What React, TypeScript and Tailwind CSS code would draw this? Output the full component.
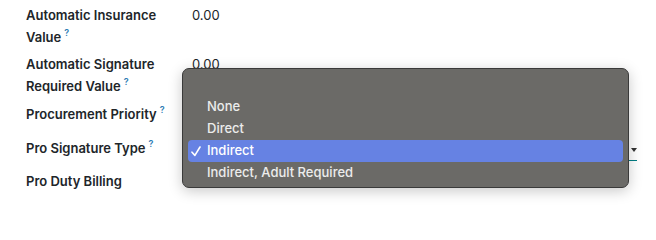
import React from "react";

const Help = () => (
  <span className="inline-block ml-[3px] text-[9px] leading-[9px] font-semibold text-[#2f7db5] relative -top-[6px]">?</span>
);

function Row({
  label,
  help,
  value,
  h,
  children,
}: {
  label: string;
  help?: boolean;
  value?: string;
  h: string;
  children?: React.ReactNode;
}) {
  return (
    <div className={`flex ${h}`}>
      <div className="w-[154px] shrink-0 font-semibold text-[13px] leading-[22px] text-[#212529]">
        {label}
        {help && <Help />}
      </div>
      <div className="ml-[12px] w-[445px] text-[13px] leading-[22px] text-[#212529]">
        {value}
        {children}
      </div>
    </div>
  );
}

export default function App() {
  const items = ["None", "Direct", "Indirect", "Indirect, Adult Required"];
  return (
    <div
      className="relative w-[656px] h-[206px] overflow-hidden bg-white"
      style={{ fontFamily: "Inter, 'Noto Sans', sans-serif" }}
    >
      <div className="flex flex-col pl-[26px] pt-[4px]">
        <Row label="Automatic Insurance Value" help value="0.00" h="h-[49px]" />
        <Row label="Automatic Signature Required Value" help value="0.00" h="h-[50px]" />
        <Row label="Procurement Priority" help h="h-[34px]" />
        <Row label="Pro Signature Type" help h="h-[33px]">
          <div className="relative h-[24px] border-b border-[#017e84]">
            <div className="absolute right-[0px] top-[11px] w-0 h-0 border-l-[3.5px] border-r-[3.5px] border-t-[4px] border-l-transparent border-r-transparent border-t-[#333]" />
          </div>
        </Row>
        <Row label="Pro Duty Billing" h="h-[30px]" />
      </div>

      <div className="absolute left-[182px] top-[68px] w-[447px] h-[120px] rounded-[7px] border border-[#3a3a3a] bg-[#6b6a67] shadow-[0_3px_14px_rgba(0,0,0,0.22)] px-[5px] pt-[27px]">
        {items.map((it) => {
          const sel = it === "Indirect";
          return (
            <div
              key={it}
              className={`relative h-[22px] flex items-center pl-[19px] text-[13px] font-medium ${
                sel ? "bg-[#6682e3] rounded-[4px] text-white" : "text-[#ececec]"
              }`}
            >
              {sel && (
                <svg className="absolute left-[3px] top-[6px]" width="10" height="11" viewBox="0 0 10 11" fill="none">
                  <path d="M1 6.2 L3.9 9.4 L9 1" stroke="white" strokeWidth="1.6" strokeLinecap="round" strokeLinejoin="round" />
                </svg>
              )}
              {it}
            </div>
          );
        })}
      </div>
    </div>
  );
}
